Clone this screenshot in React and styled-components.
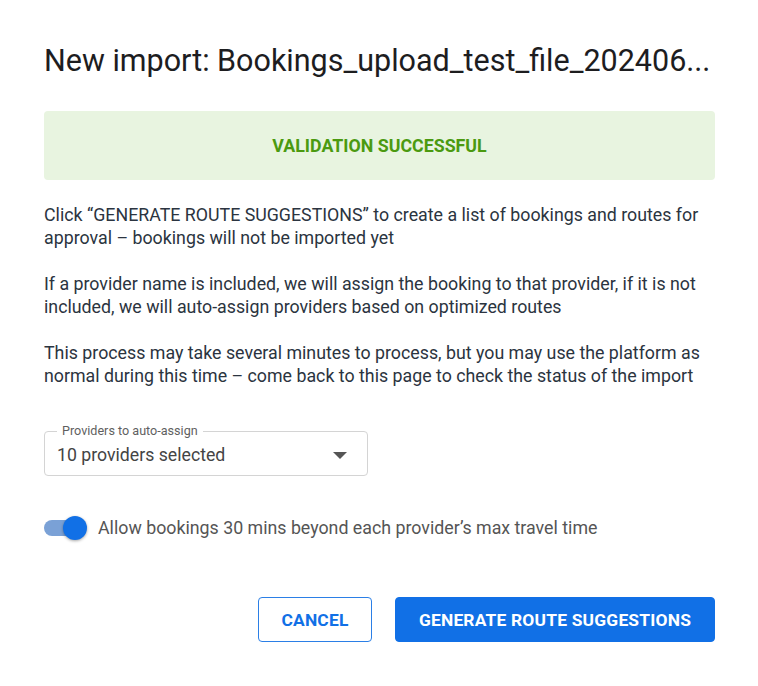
import React, { useState } from 'react';
import styled, { createGlobalStyle } from 'styled-components';

const GlobalStyle = createGlobalStyle`
  body {
    margin: 0;
    background: #ffffff;
    font-family: Roboto, "Liberation Sans", sans-serif;
  }
`;

const Dialog = styled.div`
  width: 671px;
  padding: 42px 43px 0 44px;
  display: flex;
  flex-direction: column;
`;

const Title = styled.h1`
  margin: 0;
  font-size: 30.5px;
  font-weight: 400;
  color: #1d1d1f;
  line-height: 38px;
  white-space: nowrap;
`;

const Banner = styled.div`
  margin-top: 31px;
  height: 69px;
  border-radius: 4px;
  background: #e8f4e0;
  display: flex;
  align-items: center;
  justify-content: center;
  color: #4b9a10;
  font-weight: 700;
  font-size: 17.8px;
`;

const Paragraph = styled.p`
  margin: 23px 0 0;
  font-size: 17.8px;
  line-height: 23px;
  color: #2b3440;
`;

const Field = styled.div`
  position: relative;
  margin-top: 44px;
  width: 324px;
  height: 45px;
  border: 1px solid #d4d4d4;
  border-radius: 4px;
  box-sizing: border-box;
  display: flex;
  align-items: center;
  justify-content: space-between;
  padding: 3px 20px 0 12px;
`;

const Legend = styled.span`
  position: absolute;
  top: -8px;
  left: 12px;
  padding: 0 5px;
  background: #ffffff;
  font-size: 12.6px;
  line-height: 14px;
  color: #5f5f5f;
`;

const Value = styled.span`
  font-size: 17.7px;
  color: #444444;
`;

const Caret = styled.span`
  width: 0;
  height: 0;
  border-left: 7px solid transparent;
  border-right: 7px solid transparent;
  border-top: 7px solid #555555;
`;

const ToggleRow = styled.label`
  margin-top: 41px;
  display: flex;
  align-items: center;
  gap: 12px;
  cursor: pointer;
`;

const Track = styled.span`
  position: relative;
  width: 42px;
  height: 16px;
  border-radius: 8px;
  background: ${(p) => (p.$on ? '#7aa1d6' : '#b0b0b0')};
`;

const Thumb = styled.span`
  position: absolute;
  top: 50%;
  left: ${(p) => (p.$on ? '19px' : '-2px')};
  width: 24px;
  height: 24px;
  margin-top: -12px;
  border-radius: 50%;
  background: ${(p) => (p.$on ? '#1170e6' : '#f5f5f5')};
  box-shadow: 0 1px 3px rgba(0, 0, 0, 0.35);
`;

const ToggleLabel = styled.span`
  font-size: 17.8px;
  color: #555555;
`;

const Actions = styled.div`
  margin-top: 59px;
  display: flex;
  justify-content: flex-end;
  gap: 23px;
`;

const Button = styled.button`
  height: 45px;
  width: ${(p) => (p.$primary ? '320px' : '114px')};
  padding: 0;
  border-radius: 4px;
  border: 1px solid ${(p) => (p.$primary ? '#1170e6' : '#2b7fe6')};
  background: ${(p) => (p.$primary ? '#1170e6' : '#ffffff')};
  color: ${(p) => (p.$primary ? '#ffffff' : '#1170e6')};
  font-family: Roboto, "Liberation Sans", sans-serif;
  font-weight: 700;
  font-size: 17.4px;
  letter-spacing: 0.2px;
  cursor: pointer;
`;

const App = () => {
  const [allow, setAllow] = useState(true);
  return (
    <>
      <GlobalStyle />
      <Dialog>
        <Title>New import: Bookings_upload_test_file_202406...</Title>
        <Banner>VALIDATION SUCCESSFUL</Banner>
        <Paragraph>
          Click “GENERATE ROUTE SUGGESTIONS” to create a list of bookings and routes for
          approval – bookings will not be imported yet
        </Paragraph>
        <Paragraph>
          If a provider name is included, we will assign the booking to that provider, if it is not
          included, we will auto-assign providers based on optimized routes
        </Paragraph>
        <Paragraph>
          This process may take several minutes to process, but you may use the platform as
          normal during this time – come back to this page to check the status of the import
        </Paragraph>
        <Field>
          <Legend>Providers to auto-assign</Legend>
          <Value>10 providers selected</Value>
          <Caret />
        </Field>
        <ToggleRow onClick={() => setAllow(!allow)}>
          <Track $on={allow}>
            <Thumb $on={allow} />
          </Track>
          <ToggleLabel>Allow bookings 30 mins beyond each provider’s max travel time</ToggleLabel>
        </ToggleRow>
        <Actions>
          <Button>CANCEL</Button>
          <Button $primary>GENERATE ROUTE SUGGESTIONS</Button>
        </Actions>
      </Dialog>
    </>
  );
};

export default App;
